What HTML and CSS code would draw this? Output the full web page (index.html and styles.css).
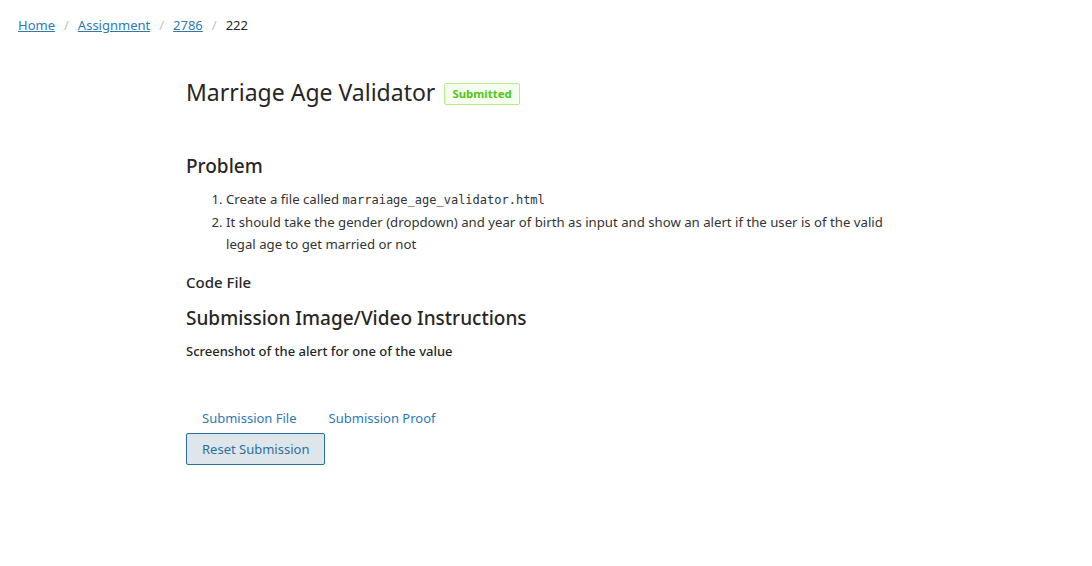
FILE: index.html
```html
<!DOCTYPE html>
<html>
<head>
<meta charset="utf-8">
<link rel="stylesheet" href="styles.css">
</head>
<body>
<nav class="breadcrumb">
  <a href="#">Home</a><span class="sep">/</span>
  <a href="#">Assignment</a><span class="sep">/</span>
  <a href="#">2786</a><span class="sep">/</span>
  <span class="current">222</span>
</nav>
<main class="content">
  <div class="title-row">
    <h1 class="title">Marriage Age Validator</h1>
    <span class="tag">Submitted</span>
  </div>
  <h2 class="section">Problem</h2>
  <ol class="steps">
    <li>Create a file called <code>marraiage_age_validator.html</code></li>
    <li>It should take the gender (dropdown) and year of birth as input and show an alert if the user is of the valid legal age to get married or not</li>
  </ol>
  <h3 class="sub">Code File</h3>
  <h2 class="section section-2">Submission Image/Video Instructions</h2>
  <p class="note">Screenshot of the alert for one of the value</p>
  <div class="tabs">
    <a class="tab" href="#">Submission File</a>
    <a class="tab" href="#">Submission Proof</a>
  </div>
  <button class="reset">Reset Submission</button>
</main>
</body>
</html>
```

FILE: styles.css
```css
* { box-sizing: border-box; }
html, body { margin: 0; padding: 0; background: #fff; }
body {
  font-family: "Noto Sans", "Open Sans", sans-serif;
  color: #262626;
  font-size: 13px;
}
.breadcrumb {
  padding: 15px 18px 0;
  font-size: 13px;
  line-height: 20px;
  display: flex;
  align-items: center;
}
.breadcrumb a { color: #2e7ab0; text-decoration: underline; }
.breadcrumb .sep { color: #bfbfbf; margin: 0 9px; }
.breadcrumb .current { color: #262626; }
.content {
  width: 720px;
  margin: 0 auto;
  padding-top: 42px;
}
.title-row { display: flex; align-items: center; gap: 9px; }
.title {
  font-size: 23px;
  font-weight: 400;
  margin: 0;
  line-height: 30px;
  color: #262626;
}
.tag {
  margin-top: 4px;
  font-size: 11.4px;
  font-weight: 700;
  color: #52c41a;
  background: #f6ffed;
  border: 1px solid #b7eb8f;
  border-radius: 2px;
  padding: 0 7px;
  line-height: 20px;
}
.section {
  font-size: 19px;
  font-weight: 500;
  margin: 45px 0 0;
  line-height: 28px;
}
.section-2 { margin-top: 11px; }
.steps {
  margin: 8px 0 0;
  padding-left: 40px;
  font-size: 13.2px;
  line-height: 22.5px;
  color: #333;
}
code {
  font-family: "DejaVu Sans Mono", monospace;
  font-size: 12px;
  line-height: 1;
}
.sub {
  font-size: 15px;
  font-weight: 500;
  margin: 15px 0 0;
  line-height: 22px;
}
.note {
  font-size: 13px;
  font-weight: 500;
  margin: 9px 0 0;
  line-height: 20px;
}
.tabs { margin-top: 47px; display: flex; gap: 32px; padding-left: 16px; }
.tab { color: #2e7ab0; text-decoration: none; font-size: 13px; line-height: 20px; }
.reset {
  margin-top: 5px;
  font-family: inherit;
  font-size: 13px;
  color: #2e6f9a;
  background: #dee6ec;
  border: 1px solid #2a6f99;
  border-radius: 2px;
  height: 32px;
  padding: 0 15px;
}
```
